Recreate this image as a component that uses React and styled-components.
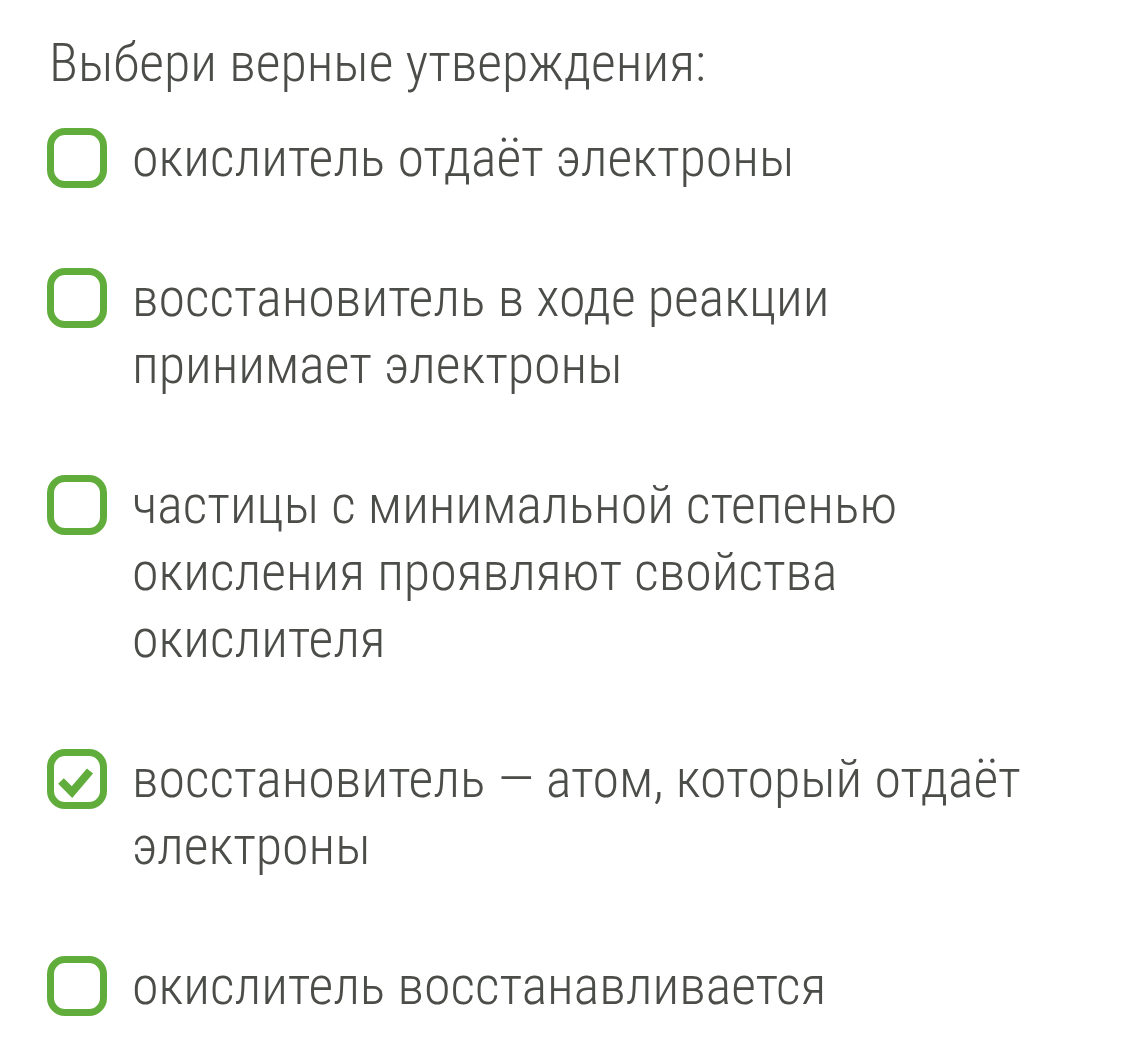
import React from "react";
import styled, { createGlobalStyle } from "styled-components";

const Global = createGlobalStyle`
  html, body { margin: 0; padding: 0; background: #ffffff; }
  body { font-family: "Roboto Condensed", Roboto, "Liberation Sans", sans-serif; }
`;

const Page = styled.div`
  padding: 28px 0 0 49px;
  color: #4b4d49;
  font-family: "Roboto Condensed", Roboto, sans-serif;
  font-weight: 300;
  font-stretch: condensed;
`;

const Title = styled.h1`
  margin: 0 0 26px 0;
  font-size: 54px;
  font-weight: 300;
  line-height: 70px;
`;

const List = styled.div`
  display: flex;
  flex-direction: column;
  gap: 73px;
`;

const Row = styled.label`
  display: flex;
  align-items: flex-start;
  gap: 25px;
`;

const Box = styled.span`
  flex: none;
  box-sizing: border-box;
  width: 60px;
  height: 60px;
  margin: 4px 0 0 -2px;
  border: 7px solid #61ad3c;
  border-radius: 18px;
  display: flex;
`;

const Label = styled.span`
  font-size: 54px;
  line-height: 67px;
  max-width: ${(p) => p.$w || 900}px;
`;

const Check = () => (
  <svg width="46" height="46" viewBox="0 0 46 46">
    <polyline points="7,25 18,36 36,15" fill="none" stroke="#61ad3c" strokeWidth="8" strokeLinecap="butt" strokeLinejoin="miter" />
  </svg>
);

const options = [
  { text: "окислитель отдаёт электроны" },
  { text: "восстановитель в ходе реакции принимает электроны", w: 720 },
  { text: "частицы с минимальной степенью окисления проявляют свойства окислителя", w: 780 },
  { text: "восстановитель — атом, который отдаёт электроны", checked: true, w: 900 },
  { text: "окислитель восстанавливается" },
];

export default function App() {
  return (
    <Page>
      <Global />
      <Title>Выбери верные утверждения:</Title>
      <List>
        {options.map((o, i) => (
          <Row key={i}>
            <Box>{o.checked && <Check />}</Box>
            <Label $w={o.w}>{o.text}</Label>
          </Row>
        ))}
      </List>
    </Page>
  );
}
